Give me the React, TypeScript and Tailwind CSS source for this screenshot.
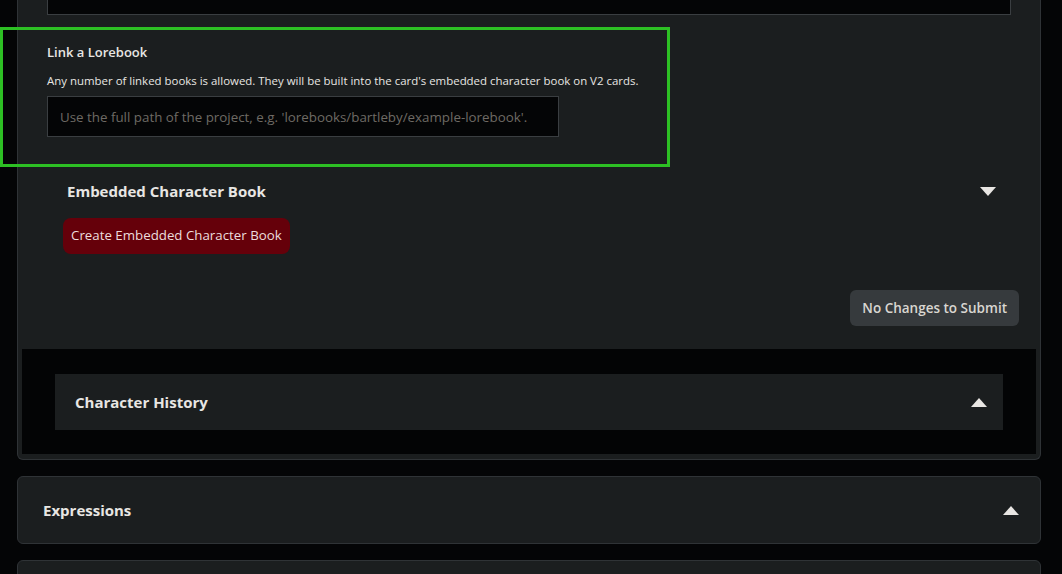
import { useState } from "react"

const Triangle = ({ up = false }: { up?: boolean }) => (
  <svg width="16" height="9" viewBox="0 0 16 9" className="shrink-0">
    {up ? (
      <polygon points="0,9 16,9 8,0" fill="#e8e6e3" />
    ) : (
      <polygon points="0,0 16,0 8,9" fill="#e8e6e3" />
    )}
  </svg>
)

export default function App() {
  const [lorebook, setLorebook] = useState("")

  return (
    <div
      className="h-[574px] w-full overflow-hidden bg-[#040506] text-[#e8e6e3]"
      style={{ fontFamily: '"Open Sans", "Noto Sans", sans-serif' }}
    >
      {/* character card editor (scrolled) */}
      <div className="ml-[17px] w-[1024px] rounded-b-md border border-t-0 border-[#2f3336] bg-[#1b1e1f] pb-[5px]">
        <div className="ml-[29px] h-[15px] w-[964px] border border-t-0 border-[#3a3e41] bg-[#040506]" />

        <div className="relative mt-[12px] pl-[29px] pt-[15px] pb-[30px]">
          <div className="pointer-events-none absolute left-[-18px] top-0 h-full w-[670px] border-[3px] border-[#2dc024]" />
          <h3 className="text-[13px] font-semibold leading-[20px]">Link a Lorebook</h3>
          <p className="mt-[11px] text-[11.45px] leading-[16px]">
            Any number of linked books is allowed. They will be built into the card's embedded character book on V2 cards.
          </p>
          <input
            value={lorebook}
            onChange={(e) => setLorebook(e.target.value)}
            placeholder="Use the full path of the project, e.g. 'lorebooks/bartleby/example-lorebook'."
            className="mt-[7px] h-[41px] w-[512px] border border-[#3a3e41] bg-[#040506] px-[12px] text-[13.35px] text-[#e8e6e3] outline-none placeholder:text-[#6e6a64]"
          />
        </div>

        <div className="flex items-center justify-between pl-[49px] pr-[44px] pt-[13px]">
          <h3 className="text-[15px] font-bold leading-[22px]">Embedded Character Book</h3>
          <Triangle />
        </div>

        <div className="pl-[45px] pt-[16px]">
          <button className="h-[36px] rounded-lg bg-[#65000a] px-[8px] text-[13.3px] text-[#ecdcdc]">
            Create Embedded Character Book
          </button>
        </div>

        <div className="flex justify-end pr-[21px] pt-[36px]">
          <button className="h-[36px] rounded-md bg-[#363a3d] px-[12px] text-[13.5px] font-semibold text-[#d9d6d1]">
            No Changes to Submit
          </button>
        </div>

        <div className="mx-[4px] mt-[23px] bg-[#030405] px-[33px] pt-[25px] pb-[24px]">
          <div className="flex h-[56px] items-center justify-between bg-[#1b1e1f] pl-[20px] pr-[16px]">
            <h3 className="text-[15px] font-bold">Character History</h3>
            <Triangle up />
          </div>
        </div>
      </div>

      <div className="ml-[17px] mt-[16px] flex h-[68px] w-[1024px] items-center justify-between rounded-md border border-[#2f3336] bg-[#1b1e1f] pl-[25px] pr-[21px]">
        <h3 className="text-[15px] font-bold">Expressions</h3>
        <Triangle up />
      </div>

      <div className="ml-[17px] mt-[16px] h-[60px] w-[1024px] rounded-md border border-[#2f3336] bg-[#1b1e1f]" />
    </div>
  )
}
